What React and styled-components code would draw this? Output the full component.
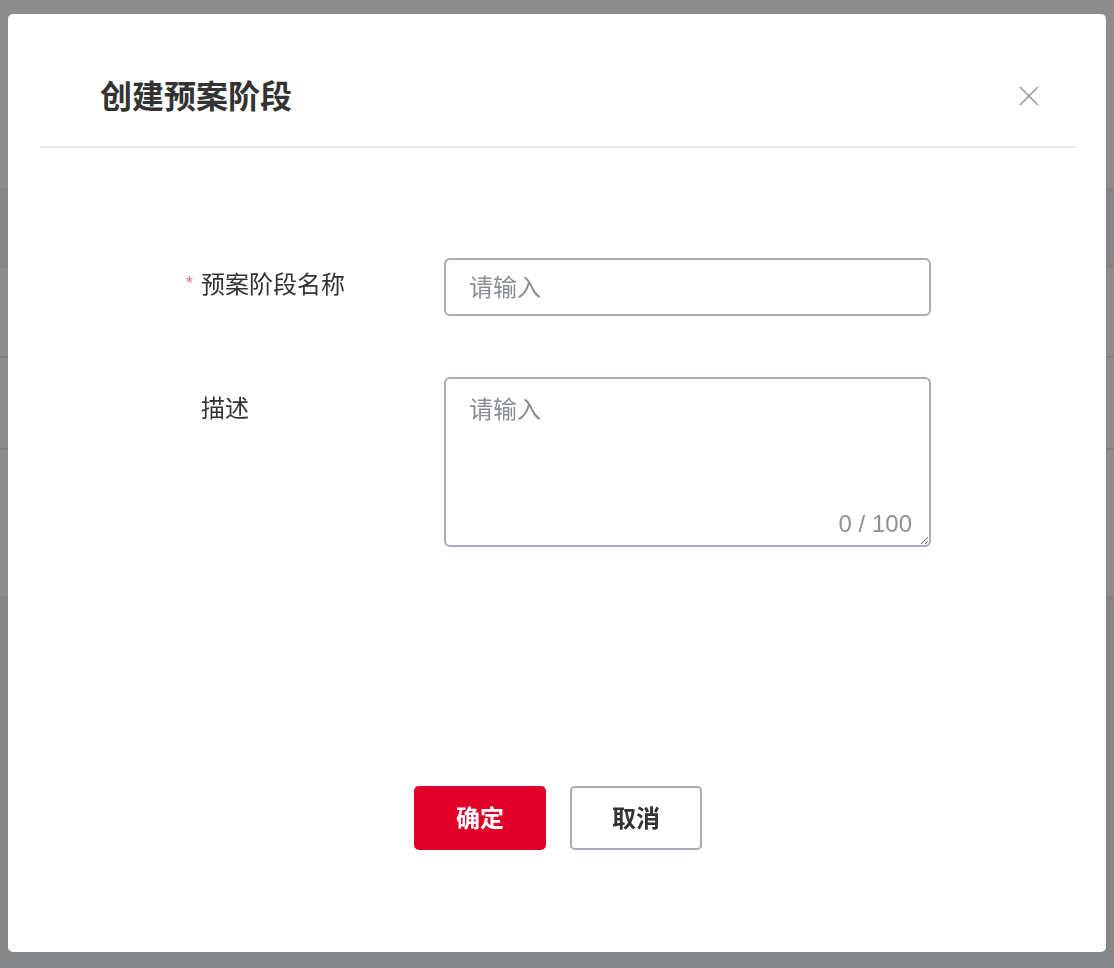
import React from "react";
import styled, { createGlobalStyle } from "styled-components";

const GlobalStyle = createGlobalStyle`
  html, body {
    margin: 0;
    padding: 0;
  }
  body {
    font-family: "Liberation Sans", "Noto Sans CJK SC", sans-serif;
    color: #333;
    background: #fff;
  }
  * {
    box-sizing: border-box;
  }
`;

function CloseIcon() {
  return (
    <svg width="20" height="20" viewBox="0 0 20 20" fill="none">
      <path d="M1 1L19 19M19 1L1 19" stroke="#999a9e" strokeWidth="1.6" />
    </svg>
  );
}

function App() {
  return (
    <>
      <GlobalStyle />
      <Page>
        <PageTop />
        <TableHead />
        <TableRow height="90px" />
        <TableRow height="92px" />
        <TableRow height="146px" last />
        <PageBottom />
      </Page>
      <Mask>
        <Modal>
          <Header>
            <Title>创建预案阶段</Title>
            <CloseButton aria-label="close">
              <CloseIcon />
            </CloseButton>
          </Header>
          <Form>
            <Label offset="7px">
              <Required>*</Required>
              预案阶段名称
            </Label>
            <Input placeholder="请输入" />
            <Label offset="12px">
              <Required />
              描述
            </Label>
            <TextareaWrap>
              <Textarea placeholder="请输入" />
              <Counter>0 / 100</Counter>
            </TextareaWrap>
          </Form>
          <Footer>
            <Button primary>确定</Button>
            <Button>取消</Button>
          </Footer>
        </Modal>
      </Mask>
    </>
  );
}

export default App;

const Page = styled.div`
  min-height: 968px;
  background: #fff;
  display: flex;
  flex-direction: column;
`;

const PageTop = styled.div`
  height: 188px;
  background: #fff;
`;

const TableHead = styled.div`
  height: 80px;
  background: #eff2f9;
`;

const TableRow = styled.div`
  height: ${(props) => props.height};
  border-bottom: ${(props) => (props.last ? "none" : "2px solid #e9ebf2")};
`;

const PageBottom = styled.div`
  flex: 1;
  background: #f1f2f5;
`;

const Mask = styled.div`
  position: fixed;
  inset: 0;
  background: rgba(0, 0, 0, 0.45);
  display: flex;
  align-items: flex-start;
  justify-content: center;
  padding-top: 14px;
`;

const Modal = styled.div`
  width: 1098px;
  height: 938px;
  background: #fff;
  border-radius: 5px;
  display: flex;
  flex-direction: column;
`;

const Header = styled.div`
  margin: 0 30px 0 32px;
  padding: 56px 36px 28px 60px;
  border-bottom: 2px solid #e4e7ec;
  display: flex;
  align-items: center;
  justify-content: space-between;
`;

const Title = styled.h2`
  margin: 0;
  font-family: "Noto Sans CJK SC", sans-serif;
  font-size: 32px;
  line-height: 48px;
  font-weight: 700;
  color: #333;
`;

const CloseButton = styled.button`
  border: none;
  background: none;
  padding: 0;
  width: 22px;
  height: 22px;
  display: flex;
  align-items: center;
  justify-content: center;
  cursor: pointer;
  margin-top: 4px;
`;

const Form = styled.div`
  margin: 110px 0 0 178px;
  display: grid;
  grid-template-columns: 258px 487px;
  row-gap: 61px;
  align-items: start;
`;

const Label = styled.label`
  display: block;
  padding-top: ${(props) => props.offset};
  font-family: "Noto Sans CJK SC", sans-serif;
  font-size: 24px;
  line-height: 36px;
  color: #333;
`;

const Required = styled.span`
  display: inline-block;
  width: 15px;
  vertical-align: top;
  font-family: "Liberation Sans", sans-serif;
  font-size: 18px;
  line-height: 36px;
  color: #f56c6c;
`;

const Input = styled.input`
  width: 487px;
  height: 58px;
  border: 2px solid #a8abb3;
  border-radius: 6px;
  padding: 0 23px 3px;
  font-family: "Noto Sans CJK SC", sans-serif;
  font-size: 24px;
  color: #333;
  outline: none;

  &::placeholder {
    color: #898d95;
  }
`;

const TextareaWrap = styled.div`
  position: relative;
  width: 487px;
  height: 170px;
`;

const Textarea = styled.textarea`
  display: block;
  width: 100%;
  height: 100%;
  border: 2px solid #a8abb3;
  border-radius: 6px;
  padding: 11px 23px;
  font-family: "Noto Sans CJK SC", sans-serif;
  font-size: 24px;
  line-height: 36px;
  color: #333;
  outline: none;
  resize: vertical;

  &::placeholder {
    color: #898d95;
  }
`;

const Counter = styled.span`
  position: absolute;
  right: 19px;
  bottom: 9px;
  font-family: "Liberation Sans", sans-serif;
  font-size: 24px;
  line-height: 28px;
  color: #8c9098;
`;

const Footer = styled.div`
  margin-top: auto;
  padding: 0 0 102px 2px;
  display: flex;
  justify-content: center;
  gap: 24px;
`;

const Button = styled.button`
  width: 132px;
  height: 64px;
  padding: 0 0 3px;
  border-radius: 5px;
  border: 2px solid ${(props) => (props.primary ? "#e0002a" : "#a8abb3")};
  background: ${(props) => (props.primary ? "#e0002a" : "#fff")};
  color: ${(props) => (props.primary ? "#fff" : "#333")};
  font-family: "Noto Sans CJK SC", sans-serif;
  font-size: 24px;
  font-weight: 700;
  cursor: pointer;
`;
